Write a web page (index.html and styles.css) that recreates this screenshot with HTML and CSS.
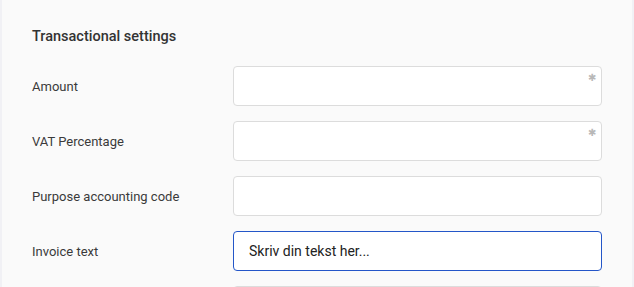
FILE: index.html
```html
<!DOCTYPE html>
<html lang="en">
<head>
<meta charset="utf-8">
<link rel="stylesheet" href="styles.css">
</head>
<body>
<div class="panel">
  <h2 class="title">Transactional settings</h2>
  <form class="form">
    <label class="label" for="amount">Amount</label>
    <div class="field">
      <input class="input" id="amount" type="text">
      <span class="req">&#x2731;</span>
    </div>
    <label class="label" for="vat">VAT Percentage</label>
    <div class="field">
      <input class="input" id="vat" type="text">
      <span class="req">&#x2731;</span>
    </div>
    <label class="label" for="pac">Purpose accounting code</label>
    <div class="field">
      <input class="input" id="pac" type="text">
    </div>
    <label class="label" for="inv">Invoice text</label>
    <div class="field">
      <input class="input focused" id="inv" type="text" value="Skriv din tekst her...">
    </div>
    <label class="label" for="next"></label>
    <div class="field">
      <input class="input" id="next" type="text">
    </div>
  </form>
</div>
</body>
</html>
```
FILE: styles.css
```css
html, body {
  margin: 0;
  padding: 0;
  background: #f1f1f5;
  height: 100%;
  overflow: hidden;
}
.panel {
  margin: 0 2px;
  background: #fafafa;
  min-height: 100%;
  padding: 27px 30px 0 30px;
  box-sizing: border-box;
  font-family: Roboto, "Liberation Sans", sans-serif;
  color: #333;
}
.title {
  margin: 0 0 19px 0;
  font-size: 14.5px;
  line-height: 20px;
  font-weight: 500;
  color: #333;
}
.form {
  display: grid;
  grid-template-columns: 201px 369px;
  row-gap: 15px;
  align-items: center;
  margin: 0;
}
.label {
  font-size: 13px;
  color: #3a3a3a;
}
.field {
  position: relative;
  height: 40px;
}
.input {
  display: block;
  width: 100%;
  height: 40px;
  box-sizing: border-box;
  border: 1px solid #dcdcdc;
  border-radius: 4px;
  background: #fff;
  padding: 0 15px;
  font-family: Roboto, "Liberation Sans", sans-serif;
  font-size: 14px;
  color: #222;
  outline: none;
}
.input.focused {
  border-color: #2456c8;
}
.req {
  position: absolute;
  top: 7px;
  right: 6px;
  font-size: 10px;
  line-height: 10px;
  color: #b8b8b8;
}
```
